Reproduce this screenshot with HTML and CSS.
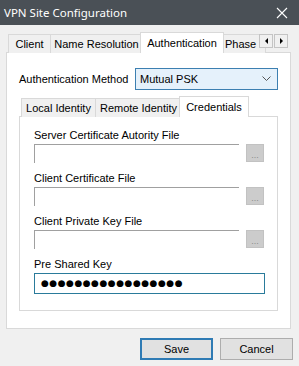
FILE: index.html
```html
<!DOCTYPE html>
<html lang="en">
  <head>
    <meta charset="UTF-8" />
    <meta name="viewport" content="width=device-width, initial-scale=1.0" />
    <title>VPN Site Configuration</title>
    <link rel="stylesheet" href="styles.css">
  </head>
  <body>
    <div class="window">
      <div class="titlebar">
        <span class="title">VPN Site Configuration</span>
        <svg class="close-icon" width="12" height="12" viewBox="0 0 12 12">
          <path d="M1 1 L11 11 M11 1 L1 11" stroke="#ffffff" stroke-width="1.1" fill="none" />
        </svg>
      </div>

      <div class="content">
        <!-- Main tabs -->
        <div class="tabstrip">
          <div class="tab tab-client">Client</div>
          <div class="tab tab-names">Name Resolution</div>
          <div class="tab tab-auth active">Authentication</div>
          <div class="tab tab-phase">Phase 1</div>
          <div class="scroller">
            <span class="scroll-btn"><span class="arrow arrow-left"></span></span>
            <span class="scroll-btn"><span class="arrow arrow-right"></span></span>
          </div>
        </div>

        <div class="panel">
          <div class="method-row">
            <label class="method-label">Authentication Method</label>
            <div class="select">
              <span>Mutual PSK</span>
              <svg width="9" height="6" viewBox="0 0 9 6">
                <path d="M0.5 0.5 L4.5 4.5 L8.5 0.5" stroke="#555" stroke-width="1" fill="none" />
              </svg>
            </div>
          </div>

          <!-- Sub tabs -->
          <div class="subtabstrip">
            <div class="tab sub-local">Local Identity</div>
            <div class="tab sub-remote">Remote Identity</div>
            <div class="tab sub-cred active">Credentials</div>
          </div>

          <div class="subpanel">
            <div class="field">
              <label class="field-label">Server Certificate Autority File</label>
              <div class="file-row">
                <div class="file-input"></div>
                <span class="browse">...</span>
              </div>
            </div>

            <div class="field">
              <label class="field-label">Client Certificate File</label>
              <div class="file-row">
                <div class="file-input"></div>
                <span class="browse">...</span>
              </div>
            </div>

            <div class="field">
              <label class="field-label">Client Private Key File</label>
              <div class="file-row">
                <div class="file-input"></div>
                <span class="browse">...</span>
              </div>
            </div>

            <div class="field">
              <label class="field-label">Pre Shared Key</label>
              <div class="psk-input">●●●●●●●●●●●●●●●●●</div>
            </div>
          </div>
        </div>

        <div class="actions">
          <button class="btn btn-default">Save</button>
          <button class="btn">Cancel</button>
        </div>
      </div>
    </div>
  </body>
</html>
```

FILE: styles.css
```css
body {
  margin: 0;
  font-family: "Liberation Sans", Arial, sans-serif;
  font-size: 11px;
  color: #000;
}

.window {
  width: 299px;
  height: 366px;
  background-color: #f0f0f0;
  overflow: hidden;
}

/* Title bar */
.titlebar {
  height: 25px;
  background-color: #4a5056;
  color: #fff;
  display: flex;
  align-items: center;
  justify-content: space-between;
  padding: 0 11px 0 4px;
}

.title {
  font-family: "Noto Sans", sans-serif;
  font-size: 11.5px;
}

.content {
  padding: 7px 8px 0 6px;
}

/* Tabs */
.tabstrip,
.subtabstrip {
  display: flex;
  align-items: flex-end;
  height: 21px;
  position: relative;
  z-index: 1;
  overflow: hidden;
}

.tabstrip {
  padding-left: 2px;
}

.subtabstrip {
  margin-left: 2px;
}

.tab {
  box-sizing: border-box;
  height: 19px;
  border: 1px solid #d9d9d9;
  border-bottom: none;
  background-color: #f0f0f0;
  display: flex;
  align-items: center;
  justify-content: center;
  white-space: nowrap;
  margin-left: -1px;
  flex-shrink: 0;
}

.tab:first-child {
  margin-left: 0;
}

.tab.active {
  height: 22px;
  margin: 0 -2px -1px -3px;
  background-color: #fff;
  position: relative;
  z-index: 2;
  padding-bottom: 2px;
}

.tab-client { width: 43px; }
.tab-names { width: 93px; }
.tab-auth { width: 84px; }
.tab-phase { width: 45px; justify-content: flex-start; padding-left: 3px; }

.sub-local { width: 75px; }
.sub-remote { width: 87px; }
.sub-cred { width: 70px; }

.scroller {
  position: absolute;
  right: 3px;
  top: 2px;
  display: flex;
  gap: 1px;
  background-color: #f0f0f0;
  z-index: 3;
}

.scroll-btn {
  box-sizing: border-box;
  width: 14px;
  height: 14px;
  border: 1px solid #c4c4c4;
  background-color: #f0f0f0;
  display: flex;
  align-items: center;
  justify-content: center;
}

.arrow {
  width: 0;
  height: 0;
  border-top: 3px solid transparent;
  border-bottom: 3px solid transparent;
}

.arrow-left {
  border-right: 3px solid #000;
}

.arrow-right {
  border-left: 3px solid #000;
}

/* Panels */
.panel {
  box-sizing: border-box;
  height: 277px;
  border: 1px solid #d9d9d9;
  background-color: #fff;
  padding: 15px 12px 0 12px;
  margin-top: -1px;
}

.method-row {
  display: flex;
  align-items: center;
  justify-content: space-between;
  margin-bottom: 6px;
}

.select {
  box-sizing: border-box;
  width: 143px;
  height: 22px;
  border: 1px solid #3c7fb1;
  background-color: #e5f1fb;
  display: flex;
  align-items: center;
  justify-content: space-between;
  padding: 0 6px 0 4px;
}

.subpanel {
  box-sizing: border-box;
  height: 195px;
  border: 1px solid #d9d9d9;
  background-color: #fff;
  margin-top: -1px;
  padding: 12px 12px 0 14px;
}

.field {
  margin-bottom: 9px;
}

.field-label {
  display: block;
  line-height: 13px;
  margin-bottom: 2px;
}

.file-row {
  display: flex;
  gap: 7px;
}

.file-input {
  box-sizing: border-box;
  width: 205px;
  height: 19px;
  border-top: 1px solid #a0a0a0;
  border-left: 1px solid #a0a0a0;
  background-color: #fff;
}

.browse {
  box-sizing: border-box;
  width: 18px;
  height: 18px;
  background-color: #cccccc;
  border: 1px solid #c2c2c2;
  color: #8c8c8c;
  font-size: 9px;
  display: flex;
  align-items: flex-end;
  justify-content: center;
  line-height: 12px;
}

.psk-input {
  box-sizing: border-box;
  width: 231px;
  height: 21px;
  border: 1px solid #2a7b9b;
  padding-left: 6px;
  font-family: "DejaVu Sans", sans-serif;
  font-size: 9px;
  letter-spacing: 0.5px;
  line-height: 19px;
}

/* Buttons */
.actions {
  display: flex;
  justify-content: flex-end;
  gap: 7px;
  margin-top: 9px;
  margin-right: -2px;
}

.btn {
  box-sizing: border-box;
  width: 73px;
  height: 22px;
  border: 1px solid #adadad;
  background-color: #e1e1e1;
  font-family: "Liberation Sans", Arial, sans-serif;
  font-size: 11px;
  padding: 0;
}

.btn-default {
  border: 2px solid #2f7bb4;
}
```
